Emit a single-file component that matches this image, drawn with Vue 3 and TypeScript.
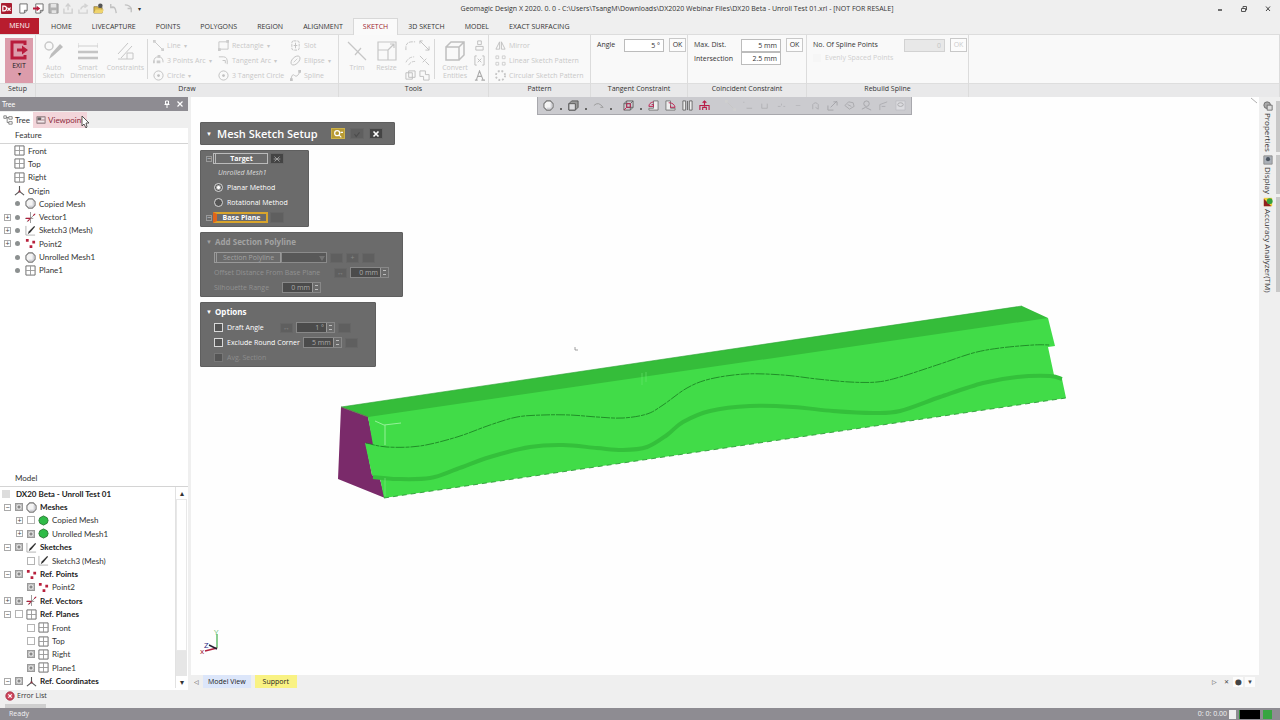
<script setup lang="ts">
import { ref } from 'vue'

type Pt = [number, number]

interface Tool { label: string; icon: string; menu?: boolean }
interface FeatureRow { label: string; icon: string; dot?: boolean; expand?: boolean }
interface ModelRow { label: string; icon?: string; level: number; sign?: string; eye?: boolean }

const tabs = ['HOME', 'LIVECAPTURE', 'POINTS', 'POLYGONS', 'REGION', 'ALIGNMENT', 'SKETCH', '3D SKETCH', 'MODEL', 'EXACT SURFACING']
const quick = ['q-new', 'q-import', 'q-save', 'q-up', 'q-share', 'q-open', 'q-undo', 'q-redo']

const drawTools: Tool[] = [
  { label: 'Line', icon: 't-line', menu: true },
  { label: 'Rectangle', icon: 't-rect', menu: true },
  { label: 'Slot', icon: 't-slot' },
  { label: '3 Points Arc', icon: 't-arc', menu: true },
  { label: 'Tangent Arc', icon: 't-tarc', menu: true },
  { label: 'Ellipse', icon: 't-ellipse', menu: true },
  { label: 'Circle', icon: 't-circle', menu: true },
  { label: '3 Tangent Circle', icon: 't-circle' },
  { label: 'Spline', icon: 't-spline' },
]
const editTools = ['t-fillet', 't-extend', 't-offset', 't-split', 't-copy', 't-merge']
const sideTools = ['t-person', 't-box', 't-text']
const patterns: Tool[] = [
  { label: 'Mirror', icon: 't-mirror' },
  { label: 'Linear Sketch Pattern', icon: 't-linear' },
  { label: 'Circular Sketch Pattern', icon: 't-circular' },
]

const features: FeatureRow[] = [
  { label: 'Front', icon: 'plane' },
  { label: 'Top', icon: 'plane' },
  { label: 'Right', icon: 'plane' },
  { label: 'Origin', icon: 'origin' },
  { label: 'Copied Mesh', icon: 'mesh', dot: true },
  { label: 'Vector1', icon: 'vector', dot: true, expand: true },
  { label: 'Sketch3 (Mesh)', icon: 'sketch', dot: true, expand: true },
  { label: 'Point2', icon: 'points', dot: true, expand: true },
  { label: 'Unrolled Mesh1', icon: 'mesh', dot: true },
  { label: 'Plane1', icon: 'plane', dot: true },
]

const models: ModelRow[] = [
  { label: 'DX20 Beta - Unroll Test 01', level: 0 },
  { label: 'Meshes', icon: 'mesh', level: 1, sign: '-', eye: true },
  { label: 'Copied Mesh', icon: 'gmesh', level: 2, sign: '+' },
  { label: 'Unrolled Mesh1', icon: 'gmesh', level: 2, sign: '+', eye: true },
  { label: 'Sketches', icon: 'sketch', level: 1, sign: '-', eye: true },
  { label: 'Sketch3 (Mesh)', icon: 'sketch', level: 2 },
  { label: 'Ref. Points', icon: 'points', level: 1, sign: '-', eye: true },
  { label: 'Point2', icon: 'points', level: 2, eye: true },
  { label: 'Ref. Vectors', icon: 'vector', level: 1, sign: '+', eye: true },
  { label: 'Ref. Planes', icon: 'plane', level: 1, sign: '-' },
  { label: 'Front', icon: 'plane', level: 2 },
  { label: 'Top', icon: 'plane', level: 2 },
  { label: 'Right', icon: 'plane', level: 2, eye: true },
  { label: 'Plane1', icon: 'plane', level: 2, eye: true },
  { label: 'Ref. Coordinates', icon: 'origin', level: 1, sign: '-', eye: true },
]

const viewTools: Tool[] = [
  { label: 'Shading', icon: 'mesh', menu: true },
  { label: 'Body display', icon: 'cube', menu: true },
  { label: 'Curve display', icon: 'curve', menu: true },
  { label: 'Region display', icon: 'rcube', menu: true },
  { label: 'View left', icon: 'v-left' },
  { label: 'View right', icon: 'v-right' },
  { label: 'Split view', icon: 'v-split' },
  { label: 'Normal to', icon: 'v-up' },
]
const ghostTools = ['t-line', 'g-angle', 'g-cup', 'g-dash', 'g-dot', 'g-lasso', 'g-brush', 'g-blob', 'g-person', 'g-flag', 'g-frame']

const docks: Tool[] = [
  { label: 'Properties', icon: 'd-prop' },
  { label: 'Display', icon: 'd-disp' },
  { label: 'Accuracy Analyzer(TM)', icon: 'd-acc' },
]

const method = ref('planar')
const angle = ref('5 °')
const maxDist = ref('5 mm')
const intersection = ref('2.5 mm')

const groove: Pt[] = [
  [366, 443], [387, 447], [420, 446], [457, 437], [490, 425], [517, 417], [543, 415], [570, 415], [597, 417],
  [623, 418], [647, 414], [663, 405], [687, 388], [710, 379], [745, 374], [783, 375], [817, 379], [850, 382],
  [877, 382], [900, 377], [940, 364], [973, 353], [1000, 348], [1033, 345], [1050, 345],
]
const ledge: Pt[] = [
  [373, 477], [397, 479], [430, 478], [457, 469], [490, 457], [530, 447], [563, 445], [597, 448], [623, 450],
  [647, 447], [667, 435], [683, 422], [710, 411], [750, 406], [793, 407], [833, 411], [873, 413], [900, 411],
  [940, 397], [983, 383], [1017, 377], [1050, 376], [1062, 379],
]

// Catmull-Rom spline through the points, written as cubic segments
function smooth(p: Pt[]): string {
  let d = `M${p[0][0]} ${p[0][1]}`
  for (let i = 0; i < p.length - 1; i++) {
    const a = p[Math.max(i - 1, 0)]
    const b = p[i]
    const c = p[i + 1]
    const e = p[Math.min(i + 2, p.length - 1)]
    d += ` C${b[0] + (c[0] - a[0]) / 6} ${b[1] + (c[1] - a[1]) / 6} ${c[0] - (e[0] - b[0]) / 6} ${c[1] - (e[1] - b[1]) / 6} ${c[0]} ${c[1]}`
  }
  return d
}
const groovePath = smooth(groove)
const ledgePath = smooth(ledge)
</script>

<template>
  <div class="app">
    <svg class="defs" aria-hidden="true">
      <symbol id="logo" viewBox="0 0 12 12"><rect width="12" height="12" rx="1" fill="#a81d30" /><path d="M2 3.500h1.500q2.500 0 2.500 2.500T3.500 8.500H2zM7 5l3.500 3.500M10.500 5L7 8.500" fill="none" stroke="#fff" stroke-width="1.300" /></symbol>
      <symbol id="q-new" viewBox="0 0 12 12"><path d="M2 1h8v7l-3 3H2zM7 11V8h3" fill="#fff" stroke="#666" /></symbol>
      <symbol id="q-import" viewBox="0 0 12 12"><path d="M3 1h8v7l-3 3H3zM8 11V8h3" fill="#fff" stroke="#666" /><path d="M0 5h4V3l4 3-4 3V7H0z" fill="#b81c3c" /></symbol>
      <symbol id="q-save" viewBox="0 0 12 12"><path d="M1 1h10v10H1z" fill="#b2b2b2" stroke="#9a9a9a" /><path d="M3 1h6v4H3zM4 8h5v3H4z" fill="#e4e4e4" /></symbol>
      <symbol id="q-up" viewBox="0 0 12 12"><path d="M1 6v5h9V6M5.500 8V2M3 4l2.500-3L8 4" fill="none" stroke="#cfcfcf" stroke-width="1.500" /></symbol>
      <symbol id="q-share" viewBox="0 0 12 12"><path d="M1 7v4h9V7M3 7q1-4 6-4M7 1l3 2-3 2" fill="none" stroke="#d3d3d3" stroke-width="1.500" /></symbol>
      <symbol id="q-open" viewBox="0 0 12 12"><path d="M1 4h4l1 1h4v6H1z" fill="#d9b84b" stroke="#80692a" stroke-width=".7" /><path d="M1 11l2-4h9l-2 4z" fill="#efd46e" /><circle cx="8" cy="3" r="2.500" fill="#555" /></symbol>
      <symbol id="q-undo" viewBox="0 0 12 12"><path d="M3 1v4h4M3 5q5-3 6 6" fill="none" stroke="#c2c2c2" stroke-width="1.500" /></symbol>
      <symbol id="q-redo" viewBox="0 0 12 12"><path d="M9 10V6H5M9 6Q7 2 2 2" fill="none" stroke="#c2c2c2" stroke-width="1.500" /></symbol>

      <symbol id="exit" viewBox="0 0 20 20"><path d="M16 5V2H3v16h13v-3" fill="none" stroke="#b81c3c" stroke-width="3" /><path d="M8 8.500h5V5.500l6 4.500-6 4.500v-3H8z" fill="#b81c3c" /></symbol>
      <symbol id="auto" viewBox="0 0 20 20"><circle cx="5" cy="5" r="4" fill="none" stroke="#c9c9c9" stroke-width="1.500" /><path d="M5 18l2-5L16 3l3 3L9 15z" fill="#bdbdbd" /></symbol>
      <symbol id="dim" viewBox="0 0 20 20"><path d="M0 5h20M0 2v5M20 2v5" stroke="#cfcfcf" fill="none" /><path d="M0 11h20M0 17h20" stroke="#c4c4c4" stroke-width="2.500" /></symbol>
      <symbol id="cons" viewBox="0 0 20 20"><path d="M3 13L13 2M6 17L17 5M3 18h15M12 18v-6h6v6" stroke="#c6c6c6" fill="none" /></symbol>
      <symbol id="trim" viewBox="0 0 20 20"><path d="M1 1l18 18M8 14l6-7" stroke="#c6c6c6" fill="none" stroke-width="1.200" /></symbol>
      <symbol id="resize" viewBox="0 0 20 20"><path d="M1 1h18v18H1zM1 9h10v10M11 9l6-6M13 3h4v4" stroke="#c6c6c6" fill="none" stroke-width="1.200" /></symbol>
      <symbol id="convert" viewBox="0 0 20 20"><path d="M1 6h13v13H1zM1 6l5-5h13v13l-5 5M14 6l5-5" stroke="#bfbfbf" fill="none" stroke-width="1.500" /></symbol>

      <symbol id="t-line" viewBox="0 0 12 12"><path d="M2 2l8 8" stroke="#c6c6c6" /><path d="M0 0h3v3H0zM9 9h3v3H9z" fill="#cfcfcf" /></symbol>
      <symbol id="t-rect" viewBox="0 0 12 12"><path d="M1 2h10v8H1z" stroke="#c4c4c4" fill="none" /><path d="M0 9h3v3H0zM9 0h3v3H9z" fill="#ccc" /></symbol>
      <symbol id="t-slot" viewBox="0 0 12 12"><rect x="2" y="1" width="8" height="10" rx="2" stroke="#c0c0c0" fill="none" stroke-dasharray="3 1" /><path d="M6 3v6M4 6h4" stroke="#c0c0c0" /></symbol>
      <symbol id="t-arc" viewBox="0 0 12 12"><path d="M1 7q0-5 5-5t5 6" stroke="#c2c2c2" fill="none" /><path d="M4 6h4v3H4zM5 0h3v3H5zM0 6h2v3H0z" fill="#ccc" /></symbol>
      <symbol id="t-tarc" viewBox="0 0 12 12"><path d="M1 2h5q5 0 4 8M5 6h3v3" stroke="#c2c2c2" fill="none" /></symbol>
      <symbol id="t-ellipse" viewBox="0 0 12 12"><ellipse cx="6" cy="6" rx="6" ry="3.500" transform="rotate(-45 6 6)" stroke="#c0c0c0" fill="none" /><path d="M4 8l4-4" stroke="#ccc" /></symbol>
      <symbol id="t-circle" viewBox="0 0 12 12"><circle cx="6" cy="6" r="5" stroke="#c0c0c0" fill="none" /><circle cx="6" cy="6" r="1.500" fill="#c0c0c0" /></symbol>
      <symbol id="t-spline" viewBox="0 0 12 12"><path d="M1 11q1-8 4-5t6-5" stroke="#c0c0c0" fill="none" /><path d="M0 9h3v3H0zM9 0h3v3H9z" fill="#c4c4c4" /></symbol>
      <symbol id="t-fillet" viewBox="0 0 12 12"><path d="M1 11V8q0-6 7-6h3" stroke="#c0c0c0" fill="none" stroke-dasharray="4 1" /></symbol>
      <symbol id="t-extend" viewBox="0 0 12 12"><path d="M1 1l10 10M11 7v4H7M1 4V1h3" stroke="#c0c0c0" fill="none" /></symbol>
      <symbol id="t-offset" viewBox="0 0 12 12"><path d="M1 8q3-6 9-6M4 11q2-4 7-4" stroke="#c6c6c6" fill="none" stroke-dasharray="4 1" /></symbol>
      <symbol id="t-split" viewBox="0 0 12 12"><path d="M1 1l4 4M7 7l4 4M4 8l4-4" stroke="#c0c0c0" fill="none" /></symbol>
      <symbol id="t-copy" viewBox="0 0 12 12"><path d="M1 3h7v7H1zM4 1h7v7H4z" stroke="#bdbdbd" fill="none" /></symbol>
      <symbol id="t-merge" viewBox="0 0 12 12"><path d="M1 1h6v4h4v6H5V7H1z" stroke="#bdbdbd" fill="none" /></symbol>
      <symbol id="t-person" viewBox="0 0 12 12"><path d="M4 1h4v4H4zM2 11V7h8v4z" stroke="#bdbdbd" fill="none" /></symbol>
      <symbol id="t-box" viewBox="0 0 12 12"><path d="M3 1H1v10h2M9 1h2v10H9M4 4l4 4M8 4L4 8" stroke="#bdbdbd" fill="none" /></symbol>
      <symbol id="t-text" viewBox="0 0 12 12"><path d="M1 11h3M8 11h4M2.500 11L6 1l4 10M4 7h5" stroke="#aaa" fill="none" stroke-width="1.200" /></symbol>
      <symbol id="t-mirror" viewBox="0 0 12 12"><path d="M5 2v8H1zM7 2v8h4z" stroke="#c0c0c0" fill="none" /></symbol>
      <symbol id="t-linear" viewBox="0 0 12 12"><path d="M1 1h3v3H1zM8 1h3v3H8zM1 8h3v3H1zM8 8h3v3H8z" stroke="#cdcdcd" fill="none" /></symbol>
      <symbol id="t-circular" viewBox="0 0 12 12"><circle cx="6" cy="6" r="5" stroke="#c4c4c4" fill="none" stroke-width="2" stroke-dasharray="2 2" /></symbol>

      <symbol id="plane" viewBox="0 0 12 12"><path d="M1 1h10v10H1z" stroke="#666" fill="none" /><path d="M6 1v10M1 6h10" stroke="#999" fill="none" /></symbol>
      <symbol id="origin" viewBox="0 0 12 12"><path d="M6 1v6L1 11M6 7l5 4" stroke="#555" fill="none" stroke-width="1.200" /><path d="M5 6h2v2H5z" fill="#8d3040" /></symbol>
      <symbol id="mesh" viewBox="0 0 12 12"><path d="M4 1h4l3 3v4l-3 3H4L1 8V4z" stroke="#777" fill="#f4f4f4" stroke-width="1.200" /><path d="M9 3v6H4" stroke="#c4c4cc" fill="none" /></symbol>
      <symbol id="gmesh" viewBox="0 0 12 12"><path d="M6 1l4 2 1 3-1 3-4 2-4-2-1-3 1-3z" stroke="#287a32" fill="#2fbb47" /></symbol>
      <symbol id="vector" viewBox="0 0 12 12"><path d="M6 0v12M0 7h9M2 11l9-9" stroke="#777" stroke-width=".8" fill="none" /><path d="M1 7h5M9 4l2-2M3 10l2-2" stroke="#b0203c" stroke-width="1.200" fill="none" /></symbol>
      <symbol id="sketch" viewBox="0 0 12 12"><path d="M1 1v10h10" stroke="#999" fill="none" stroke-width=".8" /><path d="M3 10l1-3 6-6 1 1-5 6z" fill="#333" /></symbol>
      <symbol id="points" viewBox="0 0 12 12"><path d="M1 1h3v3H1zM8 3h3v3H8zM5 8h3v3H5z" fill="#b8203c" /></symbol>
      <symbol id="t-tree" viewBox="0 0 12 12"><path d="M1 1h3v3H1zM7 2h4v3H7zM7 8h4v3H7zM4 3h3M5 3v6h2" stroke="#666" fill="none" stroke-width=".9" /></symbol>
      <symbol id="t-view" viewBox="0 0 12 12"><path d="M1 2h10v8H1z" fill="#ccb4b8" stroke="#8a7a7e" /><path d="M2 3h4v3H2z" fill="#666" /><path d="M2 8h8M7 4h3" stroke="#fff" /></symbol>

      <symbol id="cube" viewBox="0 0 12 12"><path d="M1 4l3-3h7v7l-3 3H1z" fill="#999" stroke="#555" /><path d="M1 4h7v7H1z" fill="#dcdcdf" stroke="#555" /></symbol>
      <symbol id="curve" viewBox="0 0 12 12"><path d="M1 6q5-5 10 2l-3 0" stroke="#999" fill="none" /></symbol>
      <symbol id="rcube" viewBox="0 0 12 12"><path d="M1 4l3-3h7v7l-3 3H1zM1 4h7v7M8 4l3-3M4 1v7h7" stroke="#666" fill="none" /><path d="M4 4h4v4H4zM1 11l3-3" stroke="#c02050" fill="none" /></symbol>
      <symbol id="v-left" viewBox="0 0 12 12"><path d="M6 1h5v10H1V9h5z" stroke="#777" fill="#eee" /><path d="M6 2Q1 3 1 7h5V5H4" stroke="#c02050" fill="none" /></symbol>
      <symbol id="v-right" viewBox="0 0 12 12"><path d="M1 1h5v8h5v2H1z" stroke="#777" fill="#eee" /><path d="M4 3q6 0 7 5H6V6" stroke="#c02050" fill="none" /></symbol>
      <symbol id="v-split" viewBox="0 0 12 12"><path d="M1 1h3v10H1zM8 1h3v10H8z" stroke="#666" fill="#eee" /><path d="M6 1v10" stroke="#666" /></symbol>
      <symbol id="v-up" viewBox="0 0 12 12"><path d="M6 7V1M4 3l2-2 2 2M1 11V6h10v5M4 11V8h4v3" stroke="#b81c48" fill="none" stroke-width="1.200" /></symbol>
      <symbol id="g-angle" viewBox="0 0 12 12"><path d="M2 2v1M5 9h6" stroke="#b0b0b4" /></symbol>
      <symbol id="g-cup" viewBox="0 0 12 12"><path d="M3 4v5h6V4" stroke="#b0b0b4" fill="none" /></symbol>
      <symbol id="g-dash" viewBox="0 0 12 12"><path d="M2 7h3M8 7h2M6 4v2" stroke="#b4b4b8" /></symbol>
      <symbol id="g-dot" viewBox="0 0 12 12"><path d="M3 6h5" stroke="#b8b8bc" /></symbol>
      <symbol id="g-lasso" viewBox="0 0 12 12"><path d="M3 10V5q3-4 6 0v5l-3-2" stroke="#adadb1" fill="none" /></symbol>
      <symbol id="g-brush" viewBox="0 0 12 12"><path d="M1 6v5h6M4 8l7-7M7 2h4v4" stroke="#a4a4a8" fill="none" /></symbol>
      <symbol id="g-blob" viewBox="0 0 12 12"><path d="M1 6l4-4 5 1 1 4-5 3zM4 5l4 2" stroke="#a8a8ac" fill="none" /></symbol>
      <symbol id="g-person" viewBox="0 0 12 12"><circle cx="6" cy="4" r="3" stroke="#a4a4a8" fill="none" /><path d="M1 10l4-2 6 3" stroke="#a4a4a8" fill="none" /></symbol>
      <symbol id="g-flag" viewBox="0 0 12 12"><path d="M2 11V5l8-3M4 7h4" stroke="#adadb1" fill="none" /></symbol>
      <symbol id="g-frame" viewBox="0 0 12 12"><path d="M1 1h10v10H1z" stroke="#c0c0c4" fill="#dcdce0" /><ellipse cx="6" cy="5" rx="3" ry="2" stroke="#a8a8ac" fill="none" /></symbol>

      <symbol id="d-prop" viewBox="0 0 12 12"><circle cx="5" cy="5" r="4" fill="#aaa" stroke="#666" /><path d="M5 5h6v6H5z" fill="#ddd" stroke="#666" /></symbol>
      <symbol id="d-disp" viewBox="0 0 12 12"><path d="M1 1h10v10H1z" fill="#aab0b8" stroke="#888" /><circle cx="6" cy="5" r="2.500" fill="#4c5661" /></symbol>
      <symbol id="d-acc" viewBox="0 0 12 12"><path d="M1 1h10v10H1z" fill="#f0d040" /><path d="M1 2v9h9z" fill="#902020" /><circle cx="8" cy="5" r="3.500" fill="#36a03c" /></symbol>
    </svg>

    <header class="titlebar">
      <div class="quick">
        <svg class="ico12"><use href="#logo" /></svg>
        <button v-for="q in quick" :key="q" class="plain" :aria-label="q.slice(2)"><svg class="ico12"><use :href="'#' + q" /></svg></button>
        <span class="tiny">▾</span>
      </div>
      <h1>Geomagic Design X 2020. 0. 0 - C:\Users\TsangM\Downloads\DX2020 Webinar Files\DX20 Beta - Unroll Test 01.xrl - [NOT FOR RESALE]</h1>
      <div class="winbtns">
        <button class="plain" aria-label="Minimize"><svg class="ico8" viewBox="0 0 8 8"><path d="M2 5h4" stroke="#444" stroke-width="1.500" /></svg></button>
        <button class="plain" aria-label="Restore"><svg class="ico8" viewBox="0 0 8 8"><path d="M1.500 3.500h4v3h-4zM3 3V1.500h3.500v3.500H5.500" stroke="#555" fill="none" /></svg></button>
        <button class="plain" aria-label="Close"><svg class="ico8" viewBox="0 0 8 8"><path d="M2 1.500l4 4.500M6 1.500L2 6" stroke="#444" /></svg></button>
      </div>
    </header>

    <nav class="tabs">
      <button class="menu">MENU</button>
      <button v-for="t in tabs" :key="t" class="tab" :class="{ on: t === 'SKETCH' }">{{ t }}</button>
    </nav>

    <section class="ribbon">
      <div class="group">
        <div class="body setup">
          <button class="exit"><svg class="ico24"><use href="#exit" /></svg><span>EXIT</span><span class="tiny">▾</span></button>
        </div>
        <div class="cap">Setup</div>
      </div>
      <div class="group">
        <div class="body off">
          <button class="big" disabled><svg class="ico20"><use href="#auto" /></svg><span>Auto<br>Sketch</span></button>
          <button class="big wide" disabled><svg class="ico20"><use href="#dim" /></svg><span>Smart<br>Dimension</span></button>
          <button class="big wide" disabled><svg class="ico20"><use href="#cons" /></svg><span>Constraints</span></button>
          <div class="sep"></div>
          <div class="drawgrid">
            <button v-for="t in drawTools" :key="t.label" class="small" disabled>
              <svg class="ico12"><use :href="'#' + t.icon" /></svg><span>{{ t.label }}</span><span v-if="t.menu" class="tiny">▾</span>
            </button>
          </div>
        </div>
        <div class="cap">Draw</div>
      </div>
      <div class="group">
        <div class="body off">
          <button class="big" disabled><svg class="ico20"><use href="#trim" /></svg><span>Trim</span></button>
          <button class="big narrow" disabled><svg class="ico20"><use href="#resize" /></svg><span>Resize</span></button>
          <div class="icongrid two">
            <button v-for="t in editTools" :key="t" class="plain" disabled :aria-label="t.slice(2)"><svg class="ico12"><use :href="'#' + t" /></svg></button>
          </div>
          <div class="sep"></div>
          <button class="big" disabled><svg class="ico20"><use href="#convert" /></svg><span>Convert<br>Entities</span></button>
          <div class="icongrid">
            <button v-for="t in sideTools" :key="t" class="plain" disabled :aria-label="t.slice(2)"><svg class="ico12"><use :href="'#' + t" /></svg></button>
          </div>
        </div>
        <div class="cap">Tools</div>
      </div>
      <div class="group">
        <div class="body off">
          <div class="patterns">
            <button v-for="t in patterns" :key="t.label" class="small" disabled><svg class="ico12"><use :href="'#' + t.icon" /></svg><span>{{ t.label }}</span></button>
          </div>
        </div>
        <div class="cap">Pattern</div>
      </div>
      <div class="group">
        <div class="body form tangent">
          <label for="ang">Angle</label><input id="ang" v-model="angle"><button class="ok">OK</button>
        </div>
        <div class="cap">Tangent Constraint</div>
      </div>
      <div class="group">
        <div class="body form coin">
          <label for="maxd">Max. Dist.</label><input id="maxd" v-model="maxDist"><button class="ok">OK</button>
          <label for="inter">Intersection</label><input id="inter" v-model="intersection">
        </div>
        <div class="cap">Coincident Constraint</div>
      </div>
      <div class="group">
        <div class="body form rebuild">
          <label for="nsp">No. Of Spline Points</label><input id="nsp" value="0" disabled><button class="ok" disabled>OK</button>
          <label class="even"><input type="checkbox" disabled>Evenly Spaced Points</label>
        </div>
        <div class="cap">Rebuild Spline</div>
      </div>
      <div class="group"><div class="body"></div><div class="cap"></div></div>
    </section>

    <main class="work">
      <aside class="left">
        <div class="dockhead">
          <span>Tree</span>
          <button class="plain pin" aria-label="Pin"><svg class="ico8" viewBox="0 0 8 8"><path d="M2.500 1h3v3h-3zM1.500 4.500h5M4 5v3" stroke="#fff" fill="none" /></svg></button>
          <button class="plain" aria-label="Close tree"><svg class="ico8" viewBox="0 0 8 8"><path d="M1.500 1.500l5 5M6.500 1.500l-5 5" stroke="#fff" stroke-width="1.200" /></svg></button>
        </div>
        <div class="docktabs">
          <button class="dtab on"><svg class="ico10"><use href="#t-tree" /></svg>Tree</button>
          <button class="dtab hot"><svg class="ico10"><use href="#t-view" /></svg>Viewpoint</button>
          <svg class="cursor" viewBox="0 0 8 14"><path d="M1 1v10l2-2 2 4 1-1-1-4h3z" fill="#fff" stroke="#333" stroke-width=".8" /></svg>
        </div>
        <h2>Feature</h2>
        <div class="featurebox">
          <ul class="features">
            <li v-for="f in features" :key="f.label" :class="{ deep: f.dot }">
              <span v-if="f.dot" class="slot"><i v-if="f.expand" class="exp">+</i></span>
              <span v-if="f.dot" class="dot"></span>
              <svg class="ico12"><use :href="'#' + f.icon" /></svg>
              <span>{{ f.label }}</span>
            </li>
          </ul>
        </div>
        <h2 class="modelhead">Model</h2>
        <div class="modelbox">
          <ul class="models">
            <li v-for="(m, i) in models" :key="i" :class="'l' + m.level">
              <span v-if="m.level === 0" class="root"></span>
              <template v-else>
                <span class="slot"><i v-if="m.sign" class="exp">{{ m.sign === '+' ? '+' : '−' }}</i></span>
                <span class="eye" :class="{ seen: m.eye }"></span>
                <svg class="ico12"><use :href="'#' + m.icon" /></svg>
              </template>
              <span>{{ m.label }}</span>
            </li>
          </ul>
          <div class="scroll"><span>▴</span><div class="thumb"></div><div class="track"></div><span>▾</span></div>
        </div>
      </aside>

      <div class="center">
        <div class="canvas">
          <svg class="scene" viewBox="191 97 1068 577" preserveAspectRatio="xMinYMin meet">
            <path d="M341 407L368 417 374 445 366 444 372 475 380 479 385 498 338 479z" fill="#7a2a6a" />
            <path d="M341 407L1022 306 1048 318 1040 330 372 425 368 417z" fill="#35bd3a" />
            <path d="M368 417L1048 318 1055 346 1048 347 1054 375 1062 379 1066 398 384 498 380 478 372 475 365 443 373 445z" fill="#41dc48" />
            <path :d="ledgePath" fill="none" stroke="#34c03b" stroke-width="4" />
            <path :d="groovePath" fill="none" stroke="#187a20" stroke-width=".8" stroke-dasharray="9 1 4 1" />
            <path d="M384 498L1066 398" fill="none" stroke="#1f8f2b" stroke-width=".8" stroke-dasharray="5 4" />
            <path d="M341 407L1022 306" fill="none" stroke="#2ba234" stroke-width=".6" />
            <path d="M341 407l27 10" stroke="#6a5a55" stroke-width=".8" />
            <path d="M375 421l9 4 17-2M385 425v20" fill="none" stroke="#9df3a0" stroke-width=".9" />
            <path d="M385 478v18" fill="none" stroke="#83ea87" stroke-width=".6" />
            <path d="M642 373v12M646 372v10" stroke="#6ae76f" stroke-width=".6" />
            <path d="M575 347v3h3" stroke="#888" fill="none" stroke-width=".8" />
            <path d="M1251 98l6 5" stroke="#999" stroke-width=".8" />
            <path d="M217 648V634" stroke="#3fae4a" stroke-width="1.200" />
            <path d="M217 648l-12 3" stroke="#b0203c" stroke-width="1.500" />
            <path d="M217 649l-8-4" stroke="#223" stroke-width="1.500" />
            <text x="214" y="635" class="axy">Y</text>
            <text x="200" y="654" class="axx">x</text>
            <text x="204" y="648" class="axz">Z</text>
          </svg>

          <div class="viewbar">
            <template v-for="t in viewTools" :key="t.label">
              <button class="plain" :class="{ lead: t.icon === 'rcube' }" :aria-label="t.label"><svg class="ico12"><use :href="'#' + t.icon" /></svg></button>
              <span v-if="t.menu" class="pip"></span>
            </template>
            <button v-for="(g, i) in ghostTools" :key="g" class="plain" :class="{ push: i === 0 }" disabled :aria-label="g.slice(2)"><svg class="ico12"><use :href="'#' + g" /></svg></button>
          </div>

          <div class="panels">
            <section class="panel p-title">
              <span class="tri">▼</span><h3>Mesh Sketch Setup</h3>
              <button class="pbtn gold" aria-label="Preview"><svg class="ico10" viewBox="0 0 12 12"><circle cx="5" cy="5" r="3" stroke="#fff" fill="none" stroke-width="1.500" /><path d="M7 7l3 3M9 4h3" stroke="#fff" stroke-width="1.300" /></svg></button>
              <button class="pbtn" aria-label="Accept" disabled><svg class="ico10" viewBox="0 0 12 12"><path d="M3 6l2 3 4-5" stroke="#4c4c4c" fill="none" stroke-width="1.300" /></svg></button>
              <button class="pbtn dark" aria-label="Cancel"><svg class="ico10" viewBox="0 0 12 12"><path d="M3 3l6 6M9 3L3 9" stroke="#fff" stroke-width="2" /></svg></button>
            </section>

            <section class="panel p-target">
              <div class="prow"><i class="exp">−</i><button class="pick">Target</button><button class="pbtn dark" aria-label="Reset target"><svg class="ico10" viewBox="0 0 12 12"><path d="M3 3l6 6M9 3L3 9M2 6h8" stroke="#aaa" /></svg></button></div>
              <div class="prow note">Unrolled Mesh1</div>
              <label class="prow opt"><input v-model="method" type="radio" value="planar" name="method">Planar Method</label>
              <label class="prow opt"><input v-model="method" type="radio" value="rotational" name="method">Rotational Method</label>
              <div class="prow"><i class="exp">−</i><button class="pick hotpick">Base Plane</button><button class="pbtn" disabled aria-label="Reset base plane"></button></div>
            </section>

            <section class="panel p-section">
              <div class="phead"><span class="tri">▼</span><h4>Add Section Polyline</h4></div>
              <div class="prow ind">
                <button class="pick gray" disabled>Section Polyline</button>
                <span class="combo"><select disabled aria-label="Section polyline"><option></option></select><svg class="ico8" viewBox="0 0 8 8"><path d="M1 2h6L4 7z" fill="#c8c8c8" /></svg></span>
                <button class="pbtn mini" disabled aria-label="Edit"></button><button class="pbtn mini" disabled>+</button><button class="pbtn mini" disabled aria-label="Delete"></button>
              </div>
              <div class="prow ind"><label class="grow" for="offs">Offset Distance From Base Plane</label><span class="pbtn mini">↔</span><span class="spin"><input id="offs" value="0 mm" disabled><i></i></span></div>
              <div class="prow ind"><label class="sil" for="silh">Silhouette Range</label><span class="spin"><input id="silh" value="0 mm" disabled><i></i></span></div>
            </section>

            <section class="panel p-options">
              <div class="phead"><span class="tri">▼</span><h4>Options</h4></div>
              <div class="prow ind"><label class="opt draft"><input type="checkbox">Draft Angle</label><span class="pbtn mini">↔</span><span class="spin"><input value="1 °" aria-label="Draft angle" disabled><i></i></span><button class="pbtn mini" disabled aria-label="Flip draft"></button></div>
              <div class="prow ind"><label class="opt"><input type="checkbox">Exclude Round Corner</label><span class="spin"><input value="5 mm" aria-label="Corner radius" disabled><i></i></span><button class="pbtn mini" disabled aria-label="Measure"></button></div>
              <div class="prow ind dim"><label class="opt"><input type="checkbox" disabled>Avg. Section</label></div>
            </section>
          </div>
        </div>

        <div class="viewtabs">
          <button class="plain tiny">◁</button>
          <button class="vtab blue">Model View</button>
          <button class="vtab yellow">Support</button>
          <span class="fill"></span>
          <button class="plain tiny">▷</button>
          <button class="plain tiny">✕</button>
          <button class="plain tiny box">⬤</button>
          <button class="plain tiny box">▼</button>
        </div>
      </div>

      <aside class="right">
        <button v-for="d in docks" :key="d.label" class="dock"><svg class="ico10"><use :href="'#' + d.icon" /></svg><span>{{ d.label }}</span></button>
      </aside>
    </main>

    <div class="errors">
      <button class="plain errbtn"><svg class="ico10" viewBox="0 0 12 12"><circle cx="6" cy="6" r="5" fill="#d0465c" stroke="#a02a40" /><path d="M4 4l4 4M8 4L4 8" stroke="#fff" stroke-width="1.300" /></svg>Error List</button>
      <div class="errtab"></div>
    </div>
    <footer class="status"><span>Ready</span><span class="time">0: 0: 0.00</span><i class="s1"></i><i class="s2"></i><i class="s3"></i></footer>
  </div>
</template>

<style>
html, body, #app { height: 100%; margin: 0; }
</style>

<style scoped>
.app { display: flex; flex-direction: column; height: 100vh; overflow: hidden; background: #efefef; color: #333; font: 7px/10px "Open Sans", "Noto Sans", sans-serif; }
.app * { box-sizing: border-box; }
button, input, select { font: inherit; color: inherit; margin: 0; }
button { padding: 0; border: 0; background: none; }
h1, h2, h3, h4, ul { margin: 0; padding: 0; font-size: inherit; font-weight: inherit; list-style: none; }
.defs { position: absolute; width: 0; height: 0; }
svg { display: block; flex: none; }
.ico8 { width: 8px; height: 8px; }
.ico10 { width: 10px; height: 10px; }
.ico12 { width: 11px; height: 11px; }
.ico20 { width: 20px; height: 20px; }
.ico24 { width: 20px; height: 22px; }
.plain { display: flex; align-items: center; justify-content: center; }
.tiny { font-size: 6px; line-height: 6px; }

.titlebar { display: grid; grid-template-columns: 1fr auto 1fr; align-items: center; height: 17px; flex: none; }
h1 { margin-left: 74px; }
.quick { display: flex; align-items: center; gap: 4px; padding-left: 1px; }
.quick > :first-child { margin-right: 2px; }
.winbtns { display: flex; justify-content: flex-end; gap: 16px; padding-right: 8px; }

.tabs { display: flex; height: 18px; flex: none; padding-top: 1px; border-bottom: 1px solid #ddd; }
.menu { width: 39px; background: #b81c2e; color: #fff; margin-right: 2px; }
.tab { padding: 0 9px; border: 1px solid transparent; border-bottom: 0; }
.tab.on { background: #fafafa; border-color: #d8d8d8; color: #a01c30; margin-bottom: -1px; }

.ribbon { display: grid; grid-template-columns: 36px 303px 150px 102px 97px 119px 162px 1fr; height: 62px; flex: none; background: #f9f9f9; border-bottom: 1px solid #8f8f94; }
.group { display: flex; flex-direction: column; border-right: 1px solid #dcdcdc; min-width: 0; }
.body { flex: 1; display: flex; padding-top: 3px; }
.cap { height: 14px; line-height: 10px; text-align: center; background: #e9e9ea; border-top: 1px solid #dedede; color: #333; }
.setup { padding: 3px 2px 0 5px; }
.exit { flex: 1; display: flex; flex-direction: column; align-items: center; background: #dc9cab; color: #222; }
.exit svg { margin-top: 1px; }
.off { color: #c8c8c8; }
.big { display: flex; flex-direction: column; align-items: center; width: 34px; line-height: 8px; padding-top: 3px; gap: 3px; }
.big.wide { width: 41px; }
.big.narrow { width: 25px; }
.sep { width: 1px; background: #d8d8d8; margin: 1px 3px 4px; }
.group:nth-child(2) .big:first-child { margin-left: 2px; }
.group:nth-child(3) .big:first-child { margin-left: 1px; }
.drawgrid { display: grid; grid-template-columns: 65px 72px 50px; grid-auto-rows: 15px; }
.small { display: flex; align-items: center; gap: 3px; white-space: nowrap; padding-left: 2px; }
.icongrid { display: grid; grid-template-columns: 14px; grid-auto-rows: 15px; }
.icongrid.two { grid-template-columns: 14px 14px; margin-left: 4px; }
.patterns { display: grid; grid-auto-rows: 15px; padding-left: 4px; align-content: start; }
.form { display: grid; align-content: start; align-items: center; gap: 2px 5px; }
.form input:not([type]) { width: 100%; min-width: 0; height: 13px; padding: 0 3px; text-align: right; border: 1px solid #bcbcbc; background: #fff; }
.form input:disabled { background: #e8e8e8; border-color: #d2d2d2; color: #c4c4c4; }
.ok { height: 14px; border: 1px solid #c8c8c8; background: #fcfcfc; }
.ok:disabled { color: #ccc; }
.tangent { grid-template-columns: 22px 40px 17px; padding-left: 6px; }
.coin { grid-template-columns: 42px 40px 17px; padding-left: 6px; row-gap: 0; }
.rebuild { grid-template-columns: 86px 41px 17px; padding-left: 6px; }
.even { grid-column: 1 / -1; display: flex; align-items: center; gap: 4px; color: #cfcfcf; line-height: 8px; }
.even input { appearance: none; width: 8px; height: 8px; }
.form .even input:disabled { background: #f6f6f6; }

.work { flex: 1; min-height: 0; display: grid; grid-template-columns: 188px 1fr 21px; }
.left { display: flex; flex-direction: column; min-height: 0; padding-bottom: 2px; background: #fff; font: 8px/10px Lato, "Open Sans", sans-serif; }
.dockhead { display: flex; align-items: center; height: 14px; padding: 0 4px 0 2px; background: #8e8c92; color: #fff; flex: none; font-size: 7px; }
.pin { margin: 0 5px 0 auto; }
.docktabs { position: relative; display: flex; height: 17px; flex: none; padding-top: 1px; background: #efefef; }
.dtab { display: flex; align-items: center; gap: 2px; padding: 0 3px; }
.dtab.on { background: #fff; }
.dtab.hot { background: #f3d5da; color: #8e2c3c; }
.cursor { position: absolute; left: 81px; top: 4px; width: 8px; height: 14px; }
h2 { height: 16px; line-height: 15px; padding-left: 15px; border-bottom: 1px solid #d4d4d4; flex: none; }
.featurebox { flex: 1; min-height: 0; overflow: hidden; }
.features, .models { display: grid; grid-auto-rows: 1fr; }
.features { height: 133px; }
.models { height: 201px; flex: 1; }
li { display: flex; align-items: center; gap: 3px; padding-left: 14px; white-space: nowrap; }
.deep, .l1 { padding-left: 4px; }
.l0 { padding-left: 2px; gap: 6px; }
.l2 { padding-left: 16px; }
.l0, .l1 { font-weight: 700; color: #222; }
.slot { width: 8px; }
.exp { display: block; flex: none; width: 7px; height: 7px; border: 1px solid #aaa; font: 7px/5px "Liberation Sans", sans-serif; text-align: center; color: #444; }
.dot { width: 5px; height: 5px; margin-right: 2px; border-radius: 50%; background: #8c9090; }
.root { width: 8px; height: 8px; background: #ddd; }
.eye { width: 8px; height: 8px; border: 1px solid #b4b4b4; }
.eye.seen { background: radial-gradient(circle, #888 1px, #e6e6e6 2px, #bbb 3px); border-color: #999; }
.modelbox { display: flex; flex: none; }
.scroll { display: flex; flex-direction: column; width: 12px; margin-right: 1px; border-left: 1px solid #e2e2e2; text-align: center; }
.scroll span { height: 12px; line-height: 12px; }
.thumb { flex: 6; border: 1px solid #e8e8e8; }
.track { flex: 1; background: #e6e6e6; }

.center { display: flex; flex-direction: column; min-width: 0; border-left: 3px solid #efefef; }
.canvas { position: relative; flex: 1; min-height: 0; background: #fefefe; overflow: hidden; }
.scene { width: 100%; height: auto; }
.axx, .axy, .axz { font: 8px "Open Sans", sans-serif; }
.axx { fill: #a01830; }
.axy { fill: #6cc274; }
.axz { fill: #2a2a80; }
.viewbar { position: absolute; left: 346px; top: 0; display: flex; align-items: center; gap: 6px; width: 375px; height: 18px; padding: 0 5px; background: #cbcbcf; border: 1px solid #a8a8ad; border-top: 0; }
.pip { width: 2px; height: 2px; margin-top: 6px; background: #666; }
.lead { margin-left: 5px; }
.push { margin-left: auto; }

.panels { position: absolute; left: 9px; top: 25px; display: flex; flex-direction: column; align-items: flex-start; gap: 5px; color: #fff; }
.panel { background: #6b6b6b; border: 1px solid #5f5f5f; border-radius: 1px; }
.p-title { display: flex; align-items: center; gap: 5px; width: 195px; height: 23px; padding-left: 5px; }
h3 { font: 600 11px/14px "Open Sans", sans-serif; width: 109px; }
h4 { font: 700 8px/12px "Open Sans", sans-serif; }
.tri { width: 6px; font-size: 6px; line-height: 8px; }
.pbtn { display: flex; align-items: center; justify-content: center; width: 14px; height: 11px; background: #5f5f5f; color: #888; border: 1px solid #666; }
.gold { background: #b89a34; border-color: #cdb24a; }
.dark { background: #444; }
.mini { width: 13px; height: 10px; margin-left: 3px; }
.prow { display: flex; align-items: center; height: 15px; white-space: nowrap; }
.p-target { width: 109px; padding: 0 5px 1px; }
.panel .exp { width: 6px; height: 6px; margin-right: 1px; border-color: #999; color: #ccc; line-height: 4px; }
.pick { width: 55px; height: 11px; line-height: 9px; border: 1px solid #bbb; border-left: 3px double #bbb; font-weight: 700; margin-right: 2px; }
.hotpick { border: 2px solid #d8a42c; border-left: 4px solid #e0641c; line-height: 7px; }
.note { height: 14px; padding-left: 12px; font-style: italic; color: #ddd; }
.opt { display: flex; align-items: center; gap: 4px; }
.prow.opt { padding-left: 8px; }
.opt input { appearance: none; width: 9px; height: 9px; border: 1px solid #d8d8d8; background: #555; }
.opt input[type="radio"] { border-radius: 50%; }
.opt input[type="radio"]:checked { background: radial-gradient(circle, #fff 1px, #555 3px); }
.phead { display: flex; align-items: center; gap: 3px; height: 17px; padding-left: 5px; }
.ind { padding-left: 13px; }
.p-section { width: 203px; padding-bottom: 1px; color: #a2a2a2; }
.p-options { width: 176px; padding-bottom: 1px; }
.pick.gray { width: 67px; font-weight: 400; border-color: #999; margin: 0; }
.combo { display: grid; align-items: center; width: 46px; }
.combo > * { grid-area: 1 / 1; }
.combo svg { justify-self: end; margin-right: 1px; }
select { appearance: none; width: 100%; height: 11px; padding: 0; border: 1px solid #999; border-radius: 0; background: #505050; }
.grow { width: 117px; color: #919191; }
.sil { width: 65px; color: #919191; }
.spin { display: flex; margin-left: 3px; border: 1px solid #888; }
.spin input { width: 29px; height: 9px; padding: 0 2px; border: 0; background: #4b4b4b; color: #aaa; text-align: right; }
.spin i { width: 8px; height: 9px; border-left: 1px solid #999; background: linear-gradient(#bbb, #bbb) no-repeat 2px 2px / 3px 1px, linear-gradient(#bbb, #bbb) no-repeat 2px 6px / 3px 1px; }
.draft { width: 63px; }
.dim { color: #8c8c8c; }
.dim .opt input { border-color: #777; }

.viewtabs { display: flex; align-items: center; height: 15px; flex: none; padding: 0 2px 2px 0; background: #efefef; }
.viewtabs .tiny { width: 10px; height: 10px; margin-right: 2px; color: #444; }
.viewtabs .box { background: #fcfcfc; }
.vtab { height: 13px; padding: 0 5px; color: #222; }
.blue { background: #dce6fa; }
.yellow { background: #f9f283; margin-left: 4px; padding: 0 8px; }
.fill { flex: 1; }

.right { display: flex; flex-direction: column; gap: 3px; padding: 4px 0 0; background: #efefef; }
.dock { display: flex; flex-direction: column; align-items: center; gap: 2px; padding-left: 4px; padding-right: 3px; border-right: 4px solid #c8c8c8; font-size: 8px; }
.dock span { writing-mode: vertical-rl; }

.errors { display: flex; flex-direction: column; justify-content: space-between; align-items: flex-start; height: 18px; flex: none; padding: 0 5px; }
.errbtn { gap: 2px; height: 12px; }
.errtab { width: 41px; height: 4px; background: #cfcfcf; }
.status { display: flex; align-items: center; height: 12px; flex: none; padding: 0 8px 0 9px; background: #8e8c92; color: #f2f2f2; }
.time { margin-left: auto; margin-right: 2px; }
.s1 { width: 7px; height: 9px; background: #eee; margin-right: 3px; }
.s2 { width: 21px; height: 9px; background: #000; border-left: 1px solid #2f8c38; margin-right: 3px; }
.s3 { width: 9px; height: 9px; background: #37a541; }
</style>
